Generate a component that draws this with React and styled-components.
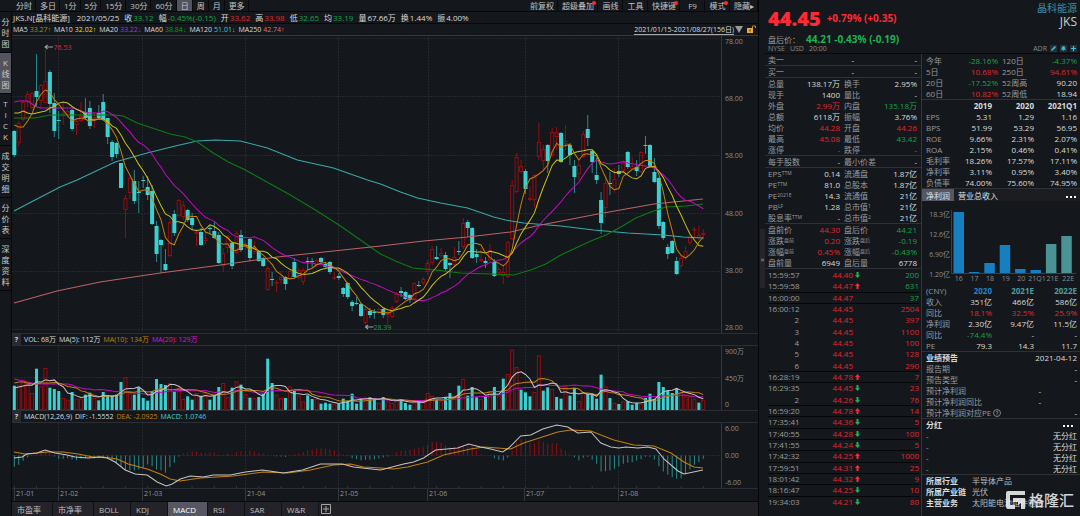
import React from "react";
import styled, { createGlobalStyle } from "styled-components";
import { Pencil, Bell, Plus } from "lucide-react";

const RED = "#e0262e";
const GREEN = "#17a149";
const CYAN = "#3dd0d0";
const ORANGE = "#c67f0c";
const MAGENTA = "#c40ac4";
const YELLOW = "#c9c414";

const tones = {
  red: RED,
  green: GREEN,
  white: "#dadada",
  label: "#9a9b9d",
  orange: ORANGE,
  yellow: "#e3e322",
  magenta: "#dd12dd",
  darkgreen: "#0c9a0c",
  cyan: "#43cfcf",
  pink: "#e8686c",
  blue: "#1f86c9",
  teal: "#4d9c9c",
};

/* ---------- chart data ---------- */

// direction, body top, body bottom, high, low
const CANDLES = `c 131 155 130 157|r 123 143 121 147|r 102 120 100 121|r 94 102 91 107|r 93 108 92 110|c 91 97 54 107|r 85 101 84 108|r 81 103 49 103|c 72 104 70 113|c 103 131 93 137|c 120 121 111 139|r 113 116 103 125|r 111 115 109 118|c 110 129 109 131|r 121 125 117 135|r 116 121 102 122|c 112 118 98 120|c 108 126 101 129|r 117 119 112 128|c 113 118 105 119|c 102 120 94 121|c 118 137 118 144|c 142 157 140 161|c 143 154 142 158|c 163 188 163 188|r 198 210 195 238|r 178 193 175 199|c 181 201 170 204|c 192 193 181 213|c 180 181 176 188|c 187 195 176 200|c 191 224 185 225|c 226 254 221 262|c 240 245 239 273|c 264 270 249 271|r 222 256 219 257|c 214 233 210 236|r 200 216 199 218|r 205 217 201 220|c 210 220 209 222|c 218 225 213 230|r 232 234 229 246|c 232 245 228 246|r 238 241 233 244|c 228 229 225 234|c 231 238 222 239|c 235 263 232 264|r 253 266 248 272|r 236 248 235 253|c 243 266 241 269|r 233 253 231 254|c 235 250 230 252|r 243 247 240 250|c 239 258 238 261|r 247 252 241 254|c 251 261 250 262|c 258 266 257 267|r 268 290 266 291|c 279 280 272 286|r 282 283 280 292|r 277 280 271 284|c 277 284 276 290|r 271 279 270 280|c 262 277 258 278|r 270 278 268 280|r 270 282 268 285|c 261 262 257 270|c 261 262 258 267|r 260 265 259 267|c 258 262 257 263|c 264 267 262 268|c 262 272 261 274|r 277 278 272 280|c 276 278 273 280|c 288 294 287 297|c 283 297 282 299|c 302 306 300 311|c 303 304 297 305|c 304 316 303 317|r 309 323 306 326|c 311 315 308 318|c 312 313 309 319|r 309 312 307 314|c 309 315 308 318|r 313 315 311 325|r 308 317 306 318|r 294 302 292 303|c 291 293 287 297|c 292 299 291 300|c 295 300 294 303|r 283 299 282 300|c 285 286 281 287|r 279 283 277 285|r 263 272 260 275|r 249 263 246 265|c 257 259 246 260|r 253 256 248 258|c 255 269 252 271|c 263 265 262 278|r 257 265 247 267|c 251 252 241 255|r 223 247 218 249|c 222 228 220 237|c 228 258 227 259|c 254 257 249 263|r 259 261 248 262|c 261 263 257 268|r 250 260 244 262|c 262 276 259 277|r 269 273 267 275|r 272 276 264 284|r 242 277 241 278|r 185 239 180 240|r 157 192 153 193|r 166 172 160 173|c 171 189 169 194|r 198 200 186 201|r 175 200 174 207|r 142 157 123 160|r 149 161 145 171|c 145 161 144 173|r 132 155 128 157|r 132 137 127 150|c 133 162 132 163|r 141 144 125 150|c 145 155 143 165|c 166 177 160 193|r 165 174 160 180|r 134 157 131 158|c 129 138 115 146|c 151 162 150 173|c 175 180 158 184|c 200 223 192 234|r 183 208 176 218|c 183 184 172 195|r 179 190 168 193|c 171 174 165 177|r 161 171 160 172|c 152 167 151 169|r 166 169 157 170|c 167 171 160 176|r 152 172 151 173|c 145 146 136 154|c 145 167 144 168|c 172 182 158 183|c 178 226 177 229|c 222 238 221 240|c 247 254 244 259|c 241 253 240 254|c 261 274 257 275|r 258 266 256 268|r 251 258 246 260|r 237 243 235 245|r 229 230 227 238|r 235 238 226 240|r 233 235 229 240`
  .split("|")
  .map((line) => {
    const [dir, top, bottom, high, low] = line.split(" ");
    return { up: dir === "r", top: +top, bottom: +bottom, high: +high, low: +low };
  });

const VOLUMES = [
  73, 76, 91, 81, 51, 124, 71, 126, 67, 63, 57, 36, 31, 54, 34, 34, 46, 52, 36, 29, 54, 44, 43, 46, 84, 99,
  51, 46, 66, 36, 28, 56, 93, 78, 75, 81, 55, 66, 33, 41, 31, 51, 43, 51, 31, 43, 69, 81, 39, 67, 86, 76,
  48, 37, 36, 39, 49, 154, 81, 46, 36, 36, 71, 58, 43, 26, 44, 33, 34, 19, 22, 19, 19, 18, 34, 28, 49, 19,
  33, 38, 38, 36, 21, 39, 26, 21, 33, 31, 21, 16, 23, 27, 26, 51, 43, 33, 26, 38, 51, 43, 73, 93, 43, 69,
  38, 33, 39, 56, 69, 44, 94, 108, 181, 129, 61, 53, 41, 54, 164, 58, 68, 63, 39, 34, 71, 43, 66, 27, 51,
  48, 46, 34, 106, 71, 36, 22, 18, 26, 26, 16, 21, 19, 36, 49, 33, 84, 69, 58, 51, 63, 53, 41, 41, 33, 22, 31,
];

// days whose volume colour differs from the candle body
const FLIPPED = [57, 110, 114, 116, 119, 122, 139, 154];

const MACD = [
  -34, -28, -16, -5, 3, 3, 8, 12, 10, -3, -10, -10, -8, -12, -14, -10, -8, -7, -9, -6, -8, -10, -15, -22, -33,
  -44, -45, -44, -42, -37, -27, -32, -42, -44, -52, -35, -22, -3, 6, 9, 12, 11, 8, 7, 10, 9, 2, 2, 7, 3, 9, 12,
  13, 14, 12, 8, 6, 3, 1, -2, -3, -4, 1, 4, 6, 10, 15, 17, 20, 22, 21, 18, 15, 9, 3, -1, -8, -11, -14, -13,
  -13, -11, -9, -6, -3, 1, 10, 14, 15, 17, 20, 23, 25, 32, 40, 40, 38, 30, 25, 23, 28, 30, 34, 29, 15, 4, 1,
  -1, -8, -13, -15, -6, 15, 38, 50, 48, 38, 37, 45, 41, 35, 37, 37, 20, 15, 4, -5, -14, -7, -4, -12, -25, -48,
  -47, -45, -40, -33, -25, -22, -20, -15, -11, -4, -4, -12, -32, -48, -58, -65, -70, -68, -56, -42, -28, -20, -10,
];

const MA60 =
  "14,118 35,118 50,115 75,115 115,115 123,116 137,123 155,129 170,134 185,137 197,142 213,153 228,162 245,170 263,180 290,195 315,210 340,226 360,240 380,254 395,261 412,268 435,270 460,273 490,274 513,275 530,270 545,264 560,255 575,248 590,241 605,235 620,227 635,218 650,212 665,207 685,206 702,204";
const MA120 =
  "14,211 35,200 60,187 77,180 115,162 147,153 175,146 197,141 215,140 240,141 267,148 297,160 333,168 367,180 380,184 400,192 417,198 440,203 467,208 493,217 505,220 523,223 560,226 593,230 627,233 663,235 682,237 702,238";
const MA250 =
  "14,303 57,291 100,282 160,273 213,266 277,257 333,251 380,246 423,241 467,237 510,232 540,225 597,214 653,204 702,199";
const DIF =
  "14,458 22,457 27,454 37,453 45,450 55,453 67,455 75,457 88,458 100,457 107,458 115,462 125,470 135,474 147,475 157,482 166,486 172,484 180,479 190,476 203,477 213,475 230,475 245,472 262,470 283,473 302,470 320,464 342,464 353,467 380,470 403,464 413,462 423,458 435,450 457,448 468,444 480,447 490,449 502,452 508,448 520,436 530,435 542,429 556,425 567,427 577,433 590,432 600,443 610,447 618,448 625,447 637,448 647,447 655,449 663,459 677,471 683,474 702,470";
const DEA =
  "14,452 25,454 37,453 47,452 63,452 78,454 93,457 103,457 117,459 128,464 147,469 160,474 170,479 180,481 200,478 233,476 263,472 287,473 310,470 333,465 350,464 363,467 380,468 393,469 407,467 427,462 443,455 470,449 483,447 497,448 510,449 523,443 557,432 570,430 590,431 613,440 633,445 653,446 670,453 683,462 693,467 702,468";

const xOf = (i) => 14.3 + i * 4.439;

// moving average; head holds the values for the days before the window is full
function average(values, n, head) {
  return values
    .map((v, i) => {
      const y =
        i < n - 1 ? head[i] : values.slice(i - n + 1, i + 1).reduce((a, b) => a + b, 0) / n;
      return `${xOf(i).toFixed(1)},${y.toFixed(1)}`;
    })
    .join(" ");
}

const closes = CANDLES.map((c) => (c.up ? c.top : c.bottom));
const volumeTops = VOLUMES.map((v) => 410 - v / 3);

const priceLines = [
  [MA120, "#39a9a9"],
  [MA60, "#0b7d12"],
  [MA250, "#bd6264"],
  [average(closes, 20, [102, 101, 101, 101, 104, 107, 108, 108, 108, 108, 108, 108, 108, 108, 109, 111, 112, 113, 113]), MAGENTA],
  [average(closes, 10, [113, 113, 111, 113, 114, 113, 112, 111, 108]), YELLOW],
  [average(closes, 5, [125, 127, 127, 121]), ORANGE],
];

const volumeLines = [
  [average(volumeTops, 20, [379, 380, 381, 382, 383, 384, 384, 384, 384, 384, 384, 384, 384, 385, 387, 388, 389, 389, 390]), MAGENTA],
  [average(volumeTops, 10, [383, 382, 382, 383, 384, 384, 383, 383, 383]), ORANGE],
  [average(volumeTops, 5, [388, 387, 386, 385]), "#c4c4c4"],
];

const MONTH_LINES = [58.5, 142.5, 245.5, 338.5, 427.5, 524.5, 618];
const months = ["21-01", "21-02", "21-03", "21-04", "21-05", "21-06", "21-07", "21-08"];

/* ---------- quote data ---------- */

const periods = ["分时", "多日", "1分", "5分", "15分", "30分", "60分", "日", "周", "月", "更多"];
const tools = [
  ["前复权"],
  ["超级叠加", true],
  ["画线"],
  ["工具"],
  ["快捷键", true],
  ["F9"],
  ["模式", true],
  ["隐藏▸"],
];
const views = ["分时图", "K线图", "TICK", "成交明细", "分价表", "深度资料"];
const indicators = ["市盈率", "市净率", "BOLL", "KDJ", "MACD", "RSI", "SAR", "W&R"];

const dayInfo = [
  ["收", "33.12", "green"],
  ["幅", "-0.45%(-0.15)", "green"],
  ["开", "33.62", "red"],
  ["高", "33.98", "red"],
  ["低", "32.65", "green"],
  ["均", "33.19", "green"],
  ["量", "67.66万", "white"],
  ["换", "1.44%", "white"],
  ["振", "4.00%", "white"],
];

const maInfo = [
  ["MA5", "33.27", "↑", "orange"],
  ["MA10", "32.02", "↑", "yellow"],
  ["MA20", "33.22", "↓", "magenta"],
  ["MA60", "38.84", "↓", "darkgreen"],
  ["MA120", "51.01", "↓", "cyan"],
  ["MA250", "42.74", "↑", "pink"],
];

// label, small mark, value, tone, label, small mark, value, tone
const quoteGroups = [
  [
    ["总量", "", "138.17万", "white", "换手", "", "2.95%", "white"],
    ["现手", "", "1400", "white", "量比", "", "-", "white"],
    ["外盘", "", "2.99万", "red", "内盘", "", "135.18万", "green"],
    ["总额", "", "6118万", "white", "振幅", "", "3.76%", "white"],
    ["均价", "", "44.28", "red", "开盘", "", "44.26", "red"],
    ["最高", "", "45.08", "red", "最低", "", "43.42", "green"],
    ["涨停", "", "-", "red", "跌停", "", "-", "green"],
  ],
  [["每手股数", "", "-", "white", "最小价差", "", "-", "white"]],
  [
    ["EPS", "TTM", "0.14", "white", "流通盘", "", "1.87亿", "white"],
    ["PE", "TTM", "81.0", "white", "总股本", "", "1.87亿", "white"],
    ["PE", "2021E", "14.3", "white", "流通值", "", "21亿", "white"],
    ["PB", "LF", "1.28", "white", "总市值", "1", "21亿", "white"],
    ["股息率", "TTM", "-", "white", "总市值", "2", "21亿", "white"],
  ],
  [
    ["盘前价", "", "44.30", "red", "盘后价", "", "44.21", "green"],
    ["涨跌", "盘前", "0.20", "red", "涨跌", "盘后", "-0.19", "green"],
    ["涨幅", "盘前", "0.45%", "red", "涨幅", "盘后", "-0.43%", "green"],
    ["盘前量", "", "6949", "white", "盘后量", "", "6778", "white"],
  ],
];

// time, price, arrow, volume, volume tone, line under
const trades = [
  ["15:59:57", "44.40", "down", "200", "green"],
  ["15:59:58", "44.47", "up", "631", "green", true],
  ["16:00:00", "44.47", "", "37", "green", true],
  ["16:00:12", "44.45", "", "2504", "red"],
  ["2", "44.45", "", "397", "red"],
  ["3", "44.45", "", "1100", "red"],
  ["4", "44.45", "", "100", "red"],
  ["5", "44.45", "", "128", "red"],
  ["6", "44.45", "", "290", "red", true],
  ["16:28:19", "44.78", "up", "7", "red", true],
  ["16:29:35", "44.45", "down", "23", "red"],
  ["2", "44.26", "down", "76", "red", true],
  ["16:59:20", "44.78", "up", "14", "red", true],
  ["17:35:41", "44.36", "down", "5", "red", true],
  ["17:40:55", "44.28", "down", "100", "red", true],
  ["17:41:55", "44.24", "down", "5", "red", true],
  ["17:42:32", "44.25", "up", "1000", "red", true],
  ["17:59:51", "44.31", "up", "25", "red", true],
  ["18:01:42", "44.32", "up", "9", "red", true],
  ["18:16:47", "44.25", "down", "10", "red", true],
  ["19:34:03", "44.21", "down", "80", "red"],
];

const performance = [
  ["今年", "", "-28.16%", "green", "120日", "", "-4.37%", "green"],
  ["5日", "", "10.68%", "red", "250日", "", "94.61%", "red"],
  ["20日", "", "-17.52%", "green", "52周高", "", "90.20", "white"],
  ["60日", "", "10.82%", "red", "52周低", "", "18.94", "white"],
];

const financials = [
  ["EPS", "5.31", "1.29", "1.16"],
  ["BPS", "51.99", "53.29", "56.95"],
  ["ROE", "9.66%", "2.31%", "2.07%"],
  ["ROA", "2.15%", "0.46%", "0.41%"],
  ["毛利率", "18.26%", "17.57%", "17.11%"],
  ["净利率", "3.11%", "0.95%", "3.40%"],
  ["负债率", "74.00%", "75.60%", "74.95%"],
];

const forecast = [
  ["收入", "white", "351亿", "466亿", "586亿"],
  ["同比", "red", "18.1%", "32.5%", "25.9%"],
  ["净利润", "white", "2.30亿", "9.47亿", "11.5亿"],
  ["同比", "green", "-74.4%", "-", "-"],
  ["PE", "white", "79.3", "14.3", "11.7"],
];

const profitBars = [
  ["16", 61],
  ["17", 1],
  ["18", 10],
  ["19", 28],
  ["20", 4],
  ["21Q1", 3],
  ["21E", 29],
  ["22E", 37],
];

/* ---------- styles ---------- */

const GlobalStyle = createGlobalStyle`
  * {
    box-sizing: border-box;
  }

  body {
    margin: 0;
    background: #14181c;
    color: #dadada;
    font-family: "Open Sans", "Noto Sans CJK SC", sans-serif;
    font-size: 8px;
    line-height: 11px;
  }

  button {
    margin: 0;
    padding: 0;
    border: 0;
    background: none;
    color: inherit;
    font: inherit;
    cursor: pointer;
    white-space: nowrap;
  }
`;

const Page = styled.div`
  position: relative;
  display: grid;
  grid-template-columns: minmax(0, 1fr) 7px 315px;
  min-height: 100vh;
`;

const ChartSide = styled.main`
  display: flex;
  flex-direction: column;
  min-width: 0;
`;

const Toolbar = styled.div`
  display: flex;
  height: 12px;
  padding-left: 12px;
  border-bottom: 1px solid #08090b;
`;

const ToolGroup = styled.div`
  display: flex;
  margin-left: auto;

  button {
    min-width: 25px;
  }
`;

const ToolButton = styled.button`
  position: relative;
  height: 11px;
  padding: 0 3px 0 4px;
  border-right: 1px solid #08090b;
  background: ${(props) => (props.$active ? "#53545f" : "none")};
  color: #c3c3c3;
  line-height: 11px;
`;

const Dot = styled.span`
  position: absolute;
  top: 1px;
  right: 1px;
  width: 4px;
  height: 4px;
  border-radius: 50%;
  background: #ff2a2a;
`;

const ChartBody = styled.div`
  display: flex;
  flex: 1;
`;

const ViewBar = styled.nav`
  display: flex;
  flex-direction: column;
  width: 12px;
  flex: none;
  border-right: 1px solid #08090b;
`;

const ViewButton = styled.button`
  width: 11px;
  padding: 4px 1px 3px;
  border-bottom: 1px solid #050607;
  background: ${(props) => (props.$active ? "#53545f" : "none")};
  color: #c9c9c9;
  line-height: 11px;
`;

const Charts = styled.div`
  display: flex;
  flex: 1;
  flex-direction: column;
  min-width: 0;
`;

const InfoRow = styled.div`
  display: flex;
  align-items: center;
  gap: ${(props) => props.$gap}px;
  height: 12px;
  padding: 0 2px 0 1px;
  border-bottom: 1px solid ${(props) => props.$line || "#08090b"};
  font-size: ${(props) => props.$size}px;
  white-space: nowrap;
`;

const Reading = styled.span`
  display: flex;
  gap: ${(props) => props.$gap}px;
`;

const Tone = styled.span`
  color: ${(props) => tones[props.$tone]};
`;

const Trend = styled.span`
  font-family: "Liberation Sans", sans-serif;
`;

const StockTag = styled.span`
  margin-right: 2px;
`;

const RangeButton = styled.button`
  display: flex;
  align-items: center;
  gap: 1px;
  margin-left: auto;

  span {
    border-bottom: 1px solid #a6a6a6;
    line-height: 9px;
  }
`;

const LockButton = styled.button`
  display: flex;
  margin-left: 1px;
`;

const HelpButton = styled.button`
  width: 9px;
  height: 11px;
  margin-left: -1px;
  background: #2a2a31;
  font-weight: 700;
`;

const Pane = styled.div`
  display: flex;
  height: ${(props) => props.$height}px;
  border-bottom: 1px solid #2b2e33;
`;

const Plot = styled.svg`
  display: block;
  flex: 1;
  min-width: 0;
  height: 100%;
`;

const Scale = styled.div`
  display: flex;
  flex-direction: column;
  justify-content: space-between;
  width: 37px;
  flex: none;
  padding: 1px 0 1px 3px;
  border-left: 1px solid #34373c;
  color: #8a8b8d;
  font-size: 7px;
  line-height: 9px;
`;

const Months = styled.div`
  display: grid;
  grid-template-columns: 44fr 84fr 103fr 93fr 89fr 97fr 94fr 140fr;
  height: 12px;
  padding-left: 2px;
  color: #929395;
  font-size: 7px;
  line-height: 10px;

  span {
    padding-left: 1px;
    border-left: 1px solid #34373c;
  }
`;

const IndicatorTabs = styled.div`
  display: flex;
  flex: 1;
  min-height: 15px;
  border-top: 1px solid #08090b;
  background: #222126;
`;

const IndicatorTab = styled.button`
  min-width: 37px;
  padding: 0 11px 0 5px;
  border-right: 1px solid #111216;
  background: ${(props) => (props.$active ? "#565763" : "#24232a")};
  color: ${(props) => (props.$active ? "#ffffff" : "#bdbdbd")};
  text-align: left;
`;

const AddTab = styled.button`
  display: flex;
  align-items: center;
  padding: 0 2px;
`;

const Gutter = styled.div`
  display: flex;
  align-items: center;
  justify-content: flex-end;
  border-left: 1px solid #050607;
`;

const FoldButton = styled.button`
  width: 5px;
  height: 59px;
  background: #24242a;
  color: #a5a5a5;
`;

const QuoteSide = styled.aside`
  display: flex;
  flex-direction: column;
`;

const QuoteHeader = styled.header`
  display: flex;
  justify-content: space-between;
  height: 54px;
  padding: 3px 3px 0;
  border-bottom: 1px solid #08090b;
`;

const PriceLine = styled.div`
  display: flex;
  align-items: center;
  gap: 6px;
  height: 30px;
  color: #ff2a35;
  font-size: 10px;
  font-weight: 700;
`;

const Price = styled.strong`
  font-size: 20px;
`;

const AfterHours = styled.div`
  display: flex;
  align-items: center;
  gap: 6px;
  height: 11px;
  margin-top: 1px;
  color: ${tones.label};

  strong {
    color: #1bb350;
    font-size: 10px;
  }
`;

const Venue = styled.div`
  display: flex;
  align-items: center;
  gap: 5px;
  height: 8px;
  color: #88898b;
  font-size: 7px;
  line-height: 8px;
`;

const NameBlock = styled.div`
  display: flex;
  flex-direction: column;
  align-items: flex-end;
`;

const StockName = styled.div`
  color: #3f8fa6;
  font-size: 10px;
  line-height: 10px;
`;

const Ticker = styled.div`
  color: #cfcfcf;
  font-size: 12px;
  line-height: 18px;
`;

const Badges = styled.div`
  display: flex;
  align-items: center;
  gap: 3px;
  height: 8px;
  margin-top: auto;
  margin-bottom: 1px;
  color: #88898b;
  font-size: 7px;
`;

const BadgeButton = styled.button`
  display: flex;
  align-items: center;
  justify-content: center;
  width: 7px;
  height: 7px;
  background: #25303a;
  color: #3fc4dc;
`;

const Columns = styled.div`
  display: grid;
  grid-template-columns: 157px minmax(0, 1fr);
  flex: 1;
`;

const QuoteColumn = styled.section`
  display: flex;
  flex-direction: column;
  border-right: 1px solid #33363a;
`;

const DetailColumn = styled.section`
  display: flex;
  flex-direction: column;
  padding-top: 1px;
`;

const Sheet = styled.table`
  display: block;
  padding: 0 3px 0 4px;
  border-bottom: 1px solid #2e3135;

  tbody,
  thead {
    display: block;
  }

  td,
  th {
    padding: 0;
    font-weight: 400;
    text-align: right;
    white-space: nowrap;
  }
`;

const QuoteSheet = styled(Sheet)`
  padding: 0 4px 0 3px;
`;

const Row = styled.tr`
  display: grid;
  grid-template-columns: ${(props) => props.$cols};
  height: 11px;
`;

const PAIR = "32px 40px 4px 26px minmax(0, 1fr)";
const BOOK = "20px 66px minmax(0, 1fr)";
const YEARS = "minmax(0, 1fr) 38px 42px 43px";

const Label = styled.th`
  && {
    color: ${tones.label};
    text-align: left;
  }

  sup {
    font-size: 5px;
    line-height: 0;
    vertical-align: 2px;
  }
`;

const PairLabel = styled(Label)`
  grid-column: 4;
`;

const Value = styled.td`
  color: ${(props) => tones[props.$tone || "white"]};
`;

const Year = styled.th`
  && {
    color: ${(props) => tones[props.$tone || "white"]};
    font-weight: 700;
  }
`;

const Trades = styled.table`
  display: flex;
  flex: 1;
  margin: 1px 2px 8px 3px;

  tbody {
    display: flex;
    flex: 1;
    flex-direction: column;
  }

  td {
    padding: 0;
    text-align: right;
  }
`;

const Trade = styled.tr`
  display: grid;
  grid-template-columns: 31px 54px 9px minmax(0, 1fr);
  flex: 1 1 11px;
  border-bottom: 1px solid ${(props) => (props.$line ? "#050607" : "transparent")};
  line-height: 10px;
`;

const Arrow = styled.svg`
  display: block;
  width: 5px;
  height: 6px;
  margin: 2px 0 0 2px;
`;

const ProfitTabs = styled.div`
  display: flex;
  align-items: center;
  height: 12px;
  background: #1c1d21;
`;

const ProfitTab = styled.button`
  height: 12px;
  padding: 0 4px;
  background: ${(props) => (props.$active ? "#565763" : "none")};
  color: #e0e0e0;
`;

const MoreButton = styled.button`
  margin-left: auto;
  padding: 0 4px;
  color: #ffffff;
`;

const Profit = styled.div`
  display: grid;
  grid-template-columns: 29px minmax(0, 1fr);
  height: 84px;
  padding: 9px 4px 0 0;
  color: #8b8c8e;
  font-size: 7px;
`;

const ProfitScale = styled.div`
  display: flex;
  flex-direction: column;
  justify-content: space-between;
  height: 69px;
  padding-right: 1px;
  line-height: 9px;
  text-align: right;
`;

const ProfitPlot = styled.svg`
  display: block;
  width: 100%;
  height: 64px;
`;

const ProfitYears = styled.div`
  display: grid;
  grid-template-columns: repeat(8, minmax(0, 1fr));
  line-height: 9px;

  span {
    display: flex;
    justify-content: center;
  }
`;

const SectionTitle = styled.th`
  && {
    font-weight: 700;
    text-align: left;
  }
`;

const HelpMark = styled.button`
  display: inline-flex;
  margin-left: 2px;
  vertical-align: -1px;
`;

const About = styled.dl`
  display: grid;
  grid-template-columns: 46px minmax(0, 1fr);
  margin: 0;
  padding: 0 3px 0 4px;

  dt {
    font-weight: 700;
  }

  dd {
    margin: 0;
    color: #bdbdbd;
    white-space: nowrap;
  }
`;

const Watermark = styled.div`
  position: absolute;
  right: 6px;
  bottom: 6px;
  display: flex;
  align-items: center;
  gap: 4px;
  color: rgba(240, 240, 240, 0.88);
  font-size: 15px;
  font-weight: 500;
  line-height: 20px;
`;

/* ---------- components ---------- */

function Lines({ lines }) {
  return lines.map(([points, color], i) => (
    <polyline key={i} points={points} fill="none" stroke={color} strokeWidth="1" />
  ));
}

function Grid({ rows, top, bottom }) {
  return (
    <g stroke="#24282c" strokeDasharray="2 1" shapeRendering="crispEdges">
      {MONTH_LINES.map((x) => (
        <line key={x} x1={x} x2={x} y1={top} y2={bottom} />
      ))}
      {rows.map((y) => (
        <line key={y} x1="12" x2="721" y1={y} y2={y} />
      ))}
    </g>
  );
}

function PriceChart() {
  return (
    <Plot viewBox="12 36 708 297" preserveAspectRatio="none">
      <Grid rows={[38.5, 96.5, 155.5, 213.5, 271.5, 329.5]} top={36} bottom={333} />
      {CANDLES.map((c, i) => {
        const x = xOf(i);
        if (c.up) {
          return (
            <g key={i} stroke="#930d10" fill="none">
              <path d={`M${x} ${c.high}V${c.top}M${x} ${c.bottom}V${c.low}`} />
              <rect x={x - 1.5} y={c.top + 0.5} width="3" height={Math.max(c.bottom - c.top - 1, 0.5)} />
            </g>
          );
        }
        return (
          <g key={i}>
            <path d={`M${x} ${c.high}V${c.low}`} stroke="#2b8a8b" />
            <rect x={x - 2} y={c.top} width="4" height={Math.max(c.bottom - c.top, 1)} fill={CYAN} />
          </g>
        );
      })}
      <Lines lines={priceLines} />
      <path d="M45 47H53M47.5 45L45 47L47.5 49M365 327H373M367.5 325L365 327L367.5 329" stroke="#a0a0a0" fill="none" />
      <text x="53.5" y="50" fill={RED} fontSize="7">76.53</text>
      <text x="373" y="330" fill={GREEN} fontSize="7">28.39</text>
    </Plot>
  );
}

function VolumeChart() {
  return (
    <Plot viewBox="12 346 708 64" preserveAspectRatio="none">
      <Grid rows={[377.5]} top={346} bottom={410} />
      {VOLUMES.map((v, i) => {
        const x = xOf(i);
        const h = v / 3;
        return CANDLES[i].up !== FLIPPED.includes(i) ? (
          <rect key={i} x={x - 1.5} y={410.5 - h} width="3" height={h - 1} fill="none" stroke="#930d10" />
        ) : (
          <rect key={i} x={x - 1.5} y={410 - h} width="3" height={h} fill={CYAN} />
        );
      })}
      <Lines lines={volumeLines} />
    </Plot>
  );
}

function MacdChart() {
  return (
    <Plot viewBox="12 423 708 65" preserveAspectRatio="none">
      <Grid rows={[455.5]} top={423} bottom={488} />
      {MACD.map((v, i) => (
        <line key={i} x1={xOf(i)} x2={xOf(i)} y1="455.5" y2={455.5 - v / 3} stroke={v > 0 ? "#930d10" : "#2b8a8b"} />
      ))}
      {MACD.map((v, i) => i % 5 === 0 && (
        <line key={i} x1={xOf(i)} x2={xOf(i)} y1="486" y2="488" stroke="#34373c" />
      ))}
      <Lines lines={[[DEA, ORANGE], [DIF, "#c4c4c4"]]} />
    </Plot>
  );
}

function PairRows({ rows }) {
  return rows.map(([a, markA, valueA, toneA, b, markB, valueB, toneB], i) => (
    <Row key={i} $cols={PAIR}>
      <Label scope="row">{a}{markA && <sup>{markA}</sup>}</Label>
      <Value $tone={toneA}>{valueA}</Value>
      <PairLabel scope="row">{b}{markB && <sup>{markB}</sup>}</PairLabel>
      <Value $tone={toneB}>{valueB}</Value>
    </Row>
  ));
}

function TradeList() {
  return (
    <Trades>
      <tbody>
        {trades.map(([time, price, arrow, volume, tone, line], i) => (
          <Trade key={i} $line={line}>
            <Value $tone="label">{time}</Value>
            <Value $tone="red">{price}</Value>
            <td>
              {arrow && (
                <Arrow viewBox="0 0 5 6">
                  <path
                    d={arrow === "up" ? "M2.5 0L5 3H3.5V6H1.5V3H0Z" : "M2.5 6L5 3H3.5V0H1.5V3H0Z"}
                    fill={arrow === "up" ? "#ff2a35" : "#1bb350"}
                  />
                </Arrow>
              )}
            </td>
            <Value $tone={tone}>{volume}</Value>
          </Trade>
        ))}
      </tbody>
    </Trades>
  );
}

function More() {
  return (
    <MoreButton aria-label="more">
      <svg width="10" height="3" viewBox="0 0 10 3">
        <path d="M0 0H2V2H0ZM4 0H6V2H4ZM8 0H10V2H8Z" fill="currentColor" />
      </svg>
    </MoreButton>
  );
}

function ProfitChart() {
  return (
    <Profit>
      <ProfitScale>
        <span>18.3亿</span>
        <span>12.6亿</span>
        <span>6.90亿</span>
        <span>1.20亿</span>
      </ProfitScale>
      <div>
        <ProfitPlot viewBox="0 0 125 64" preserveAspectRatio="none">
          <path d="M0.5 0V63.5H125" stroke="#3b3e43" fill="none" />
          {profitBars.map(([year, h], i) => (
            <rect key={year} x={2.5 + i * 15.4} y={63 - h} width="10.5" height={h} fill={i > 5 ? "#4a9395" : "#167fc0"} />
          ))}
        </ProfitPlot>
        <ProfitYears>
          {profitBars.map(([year]) => (
            <span key={year}>{year}</span>
          ))}
        </ProfitYears>
      </div>
    </Profit>
  );
}

export default function App() {
  return (
    <Page>
      <GlobalStyle />
      <ChartSide>
        <Toolbar>
          {periods.map((p) => (
            <ToolButton key={p} $active={p === "日"}>{p}</ToolButton>
          ))}
          <ToolGroup>
            {tools.map(([name, dot]) => (
              <ToolButton key={name}>
                {name}
                {dot && <Dot />}
              </ToolButton>
            ))}
          </ToolGroup>
        </Toolbar>
        <ChartBody>
          <ViewBar>
            {views.map((v) => (
              <ViewButton key={v} $active={v === "K线图"}>
                {v.split("").map((ch, i) => (
                  <div key={i}>{ch}</div>
                ))}
              </ViewButton>
            ))}
          </ViewBar>
          <Charts>
            <InfoRow $gap={5} $size={8}>
              <StockTag>JKS.N[晶科能源]</StockTag>
              <span>2021/05/25</span>
              {dayInfo.map(([name, value, tone]) => (
                <Reading key={name} $gap={1}>
                  {name}
                  <Tone $tone={tone}>{value}</Tone>
                </Reading>
              ))}
            </InfoRow>
            <InfoRow $gap={3} $size={7} $line="#34373c">
              {maInfo.map(([name, value, trend, tone]) => (
                <Reading key={name} $gap={2}>
                  {name}
                  <Tone $tone={tone}>
                    {value}
                    <Trend>{trend}</Trend>
                  </Tone>
                </Reading>
              ))}
              <RangeButton>
                <span>2021/01/15-2021/08/27(156日)</span>
                <svg width="8" height="7" viewBox="0 0 8 7">
                  <path d="M0 0H8L4 7Z" fill="#9a9a9a" />
                </svg>
              </RangeButton>
              <LockButton aria-label="lock">
                <svg width="9" height="9" viewBox="0 0 9 9">
                  <path d="M0 3H6V8H0Z" fill="#e9ab38" />
                  <path d="M5.5 3V1H8.5V3" stroke="#b98424" fill="none" />
                  <path d="M3 4.5V6.5" stroke="#3a2c10" />
                </svg>
              </LockButton>
            </InfoRow>
            <Pane $height={298}>
              <PriceChart />
              <Scale>
                <span>78.00</span>
                <span>68.00</span>
                <span>58.00</span>
                <span>48.00</span>
                <span>38.00</span>
                <span>28.00</span>
              </Scale>
            </Pane>
            <InfoRow $gap={3} $size={7} $line="#2b2e33">
              <HelpButton>?</HelpButton>
              <span>VOL: 68万</span>
              <span>MA(5): 112万</span>
              <Tone $tone="orange">MA(10): 134万</Tone>
              <Tone $tone="magenta">MA(20): 129万</Tone>
            </InfoRow>
            <Pane $height={65}>
              <VolumeChart />
              <Scale>
                <span>900万</span>
                <span>450万</span>
                <span>0</span>
              </Scale>
            </Pane>
            <InfoRow $gap={3} $size={7} $line="#2b2e33">
              <HelpButton>?</HelpButton>
              <span>MACD(12,26,9)</span>
              <span>DIF: -1.5552</span>
              <Tone $tone="orange">DEA: -2.0925</Tone>
              <Tone $tone="cyan">MACD: 1.0746</Tone>
            </InfoRow>
            <Pane $height={66}>
              <MacdChart />
              <Scale>
                <span>6.00</span>
                <span>0.00</span>
                <span>-6.00</span>
              </Scale>
            </Pane>
            <Months>
              {months.map((m) => (
                <span key={m}>{m}</span>
              ))}
            </Months>
            <IndicatorTabs>
              {indicators.map((name) => (
                <IndicatorTab key={name} $active={name === "MACD"}>{name}</IndicatorTab>
              ))}
              <AddTab aria-label="add">
                <svg width="10" height="10" viewBox="0 0 10 10">
                  <path d="M0.5 0.5H9.5V9.5H0.5ZM5 2V8M2 5H8" stroke="#a5a5a5" fill="none" />
                </svg>
              </AddTab>
            </IndicatorTabs>
          </Charts>
        </ChartBody>
      </ChartSide>

      <Gutter>
        <FoldButton>»</FoldButton>
      </Gutter>

      <QuoteSide>
        <QuoteHeader>
          <div>
            <PriceLine>
              <Price>44.45</Price>
              <span>+0.79% (+0.35)</span>
            </PriceLine>
            <AfterHours>
              盘后价：
              <strong>44.21 -0.43% (-0.19)</strong>
            </AfterHours>
            <Venue>
              <span>NYSE</span>
              <span>USD</span>
              <span>20:00</span>
            </Venue>
          </div>
          <NameBlock>
            <StockName>晶科能源</StockName>
            <Ticker>JKS</Ticker>
            <Badges>
              ADR
              <BadgeButton aria-label="edit"><Pencil size={5} fill="currentColor" /></BadgeButton>
              <BadgeButton aria-label="alert"><Bell size={5} strokeWidth={3} fill="currentColor" /></BadgeButton>
              <BadgeButton aria-label="add"><Plus size={7} strokeWidth={4} /></BadgeButton>
            </Badges>
          </NameBlock>
        </QuoteHeader>

        <Columns>
          <QuoteColumn>
            {["卖一", "买一"].map((name) => (
              <QuoteSheet key={name}>
                <tbody>
                  <Row $cols={BOOK}>
                    <Label scope="row">{name}</Label>
                    <Value>-</Value>
                    <Value>-</Value>
                  </Row>
                </tbody>
              </QuoteSheet>
            ))}
            {quoteGroups.map((rows, i) => (
              <QuoteSheet key={i}>
                <tbody>
                  <PairRows rows={rows} />
                </tbody>
              </QuoteSheet>
            ))}
            <TradeList />
          </QuoteColumn>

          <DetailColumn>
            <Sheet>
              <tbody>
                <PairRows rows={performance} />
              </tbody>
            </Sheet>
            <Sheet>
              <thead>
                <Row $cols={YEARS}>
                  <td />
                  <Year>2019</Year>
                  <Year>2020</Year>
                  <Year>2021Q1</Year>
                </Row>
              </thead>
              <tbody>
                {financials.map(([name, a, b, c]) => (
                  <Row key={name} $cols={YEARS}>
                    <Label scope="row">{name}</Label>
                    <Value>{a}</Value>
                    <Value>{b}</Value>
                    <Value>{c}</Value>
                  </Row>
                ))}
              </tbody>
            </Sheet>
            <ProfitTabs>
              <ProfitTab $active>净利润</ProfitTab>
              <ProfitTab>营业总收入</ProfitTab>
              <More />
            </ProfitTabs>
            <ProfitChart />
            <Sheet>
              <thead>
                <Row $cols={YEARS}>
                  <Label>(CNY)</Label>
                  <Year $tone="blue">2020</Year>
                  <Year $tone="teal">2021E</Year>
                  <Year $tone="teal">2022E</Year>
                </Row>
              </thead>
              <tbody>
                {forecast.map(([name, tone, a, b, c], i) => (
                  <Row key={i} $cols={YEARS}>
                    <Label scope="row">{name}</Label>
                    <Value $tone={tone}>{a}</Value>
                    <Value $tone={b === "-" ? "white" : tone}>{b}</Value>
                    <Value $tone={c === "-" ? "white" : tone}>{c}</Value>
                  </Row>
                ))}
              </tbody>
            </Sheet>
            <Sheet>
              <thead>
                <Row $cols="1fr 1fr">
                  <SectionTitle>业绩预告</SectionTitle>
                  <Value>2021-04-12</Value>
                </Row>
              </thead>
              <tbody>
                <Row $cols="80px 1fr">
                  <Label scope="row">报告期</Label>
                  <Value>-</Value>
                </Row>
                <Row $cols="80px 1fr">
                  <Label scope="row">预告类型</Label>
                  <Value>-</Value>
                </Row>
                <Row $cols="80px 35px 1fr">
                  <Label scope="row">预计净利润</Label>
                  <Value>-</Value>
                </Row>
                <Row $cols="80px 35px 1fr">
                  <Label scope="row">预计净利润同比</Label>
                  <Value>-</Value>
                </Row>
                <Row $cols="80px 1fr">
                  <Label scope="row">
                    预计净利润对应PE
                    <HelpMark aria-label="help">
                      <svg width="8" height="8" viewBox="0 0 8 8" fill="none" stroke="#9a9b9d">
                        <circle cx="4" cy="4" r="3.5" strokeWidth="0.8" />
                        <path d="M3 3.2C3 1.8 5 1.8 5 3.1C5 4 4 4 4 4.8M4 5.4V6.2" strokeWidth="0.8" />
                      </svg>
                    </HelpMark>
                  </Label>
                  <Value>-</Value>
                </Row>
              </tbody>
            </Sheet>
            <Sheet>
              <thead>
                <Row $cols="1fr 20px">
                  <SectionTitle>分红</SectionTitle>
                  <td>
                    <More />
                  </td>
                </Row>
              </thead>
              <tbody>
                {[0, 1, 2, 3].map((i) => (
                  <Row key={i} $cols="1fr 1fr">
                    <Label scope="row">-</Label>
                    <Value>无分红</Value>
                  </Row>
                ))}
              </tbody>
            </Sheet>
            <About>
              <dt>所属行业</dt>
              <dd>半导体产品</dd>
              <dt>所属产业链</dt>
              <dd>光伏</dd>
              <dt>主营业务</dt>
              <dd>太阳能电池组件制造</dd>
            </About>
          </DetailColumn>
        </Columns>
      </QuoteSide>

      <Watermark>
        <svg width="19" height="18" viewBox="0 0 19 18">
          <path d="M0 2Q0 0 2 0H19V4H4V14H9V18H2Q0 18 0 16ZM7 7H19V18H15V12L12 14V11H7Z" fill="currentColor" />
        </svg>
        格隆汇
      </Watermark>
    </Page>
  );
}
